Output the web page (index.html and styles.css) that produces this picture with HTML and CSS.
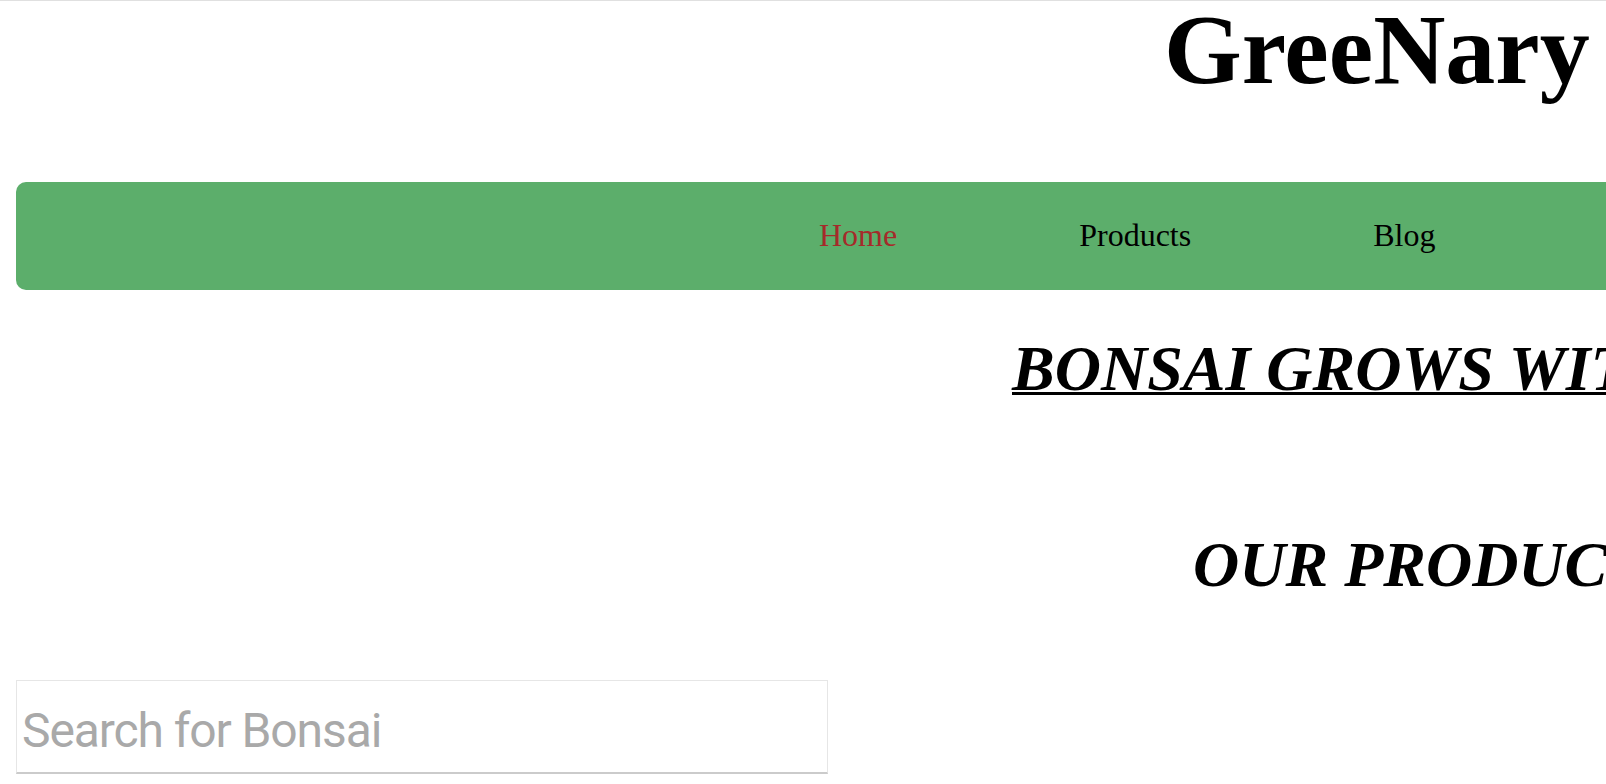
FILE: index.html
```html
<!DOCTYPE html>
<html lang="en">
<head>
<meta charset="utf-8">
<title>GreeNary</title>
<link rel="stylesheet" href="styles.css">
</head>
<body>
<div class="page">
  <header class="masthead">
    <h1 class="brand">GreeNary</h1>
  </header>
  <nav class="menu">
    <ul class="menu-list">
      <li class="menu-item"><a class="menu-link is-active" href="#">Home</a></li>
      <li class="menu-item"><a class="menu-link" href="#">Products</a></li>
      <li class="menu-item"><a class="menu-link" href="#">Blog</a></li>
    </ul>
  </nav>
  <main class="content">
    <h2 class="tagline">BONSAI GROWS WITH LOVE</h2>
    <h2 class="section-title">OUR PRODUCTS</h2>
    <input class="search" type="text" placeholder="Search for Bonsai">
  </main>
</div>
</body>
</html>
```
FILE: styles.css
```css
html {
  overflow: hidden;
}

body {
  margin: 0;
  border-top: 1px solid #e0e0e0;
  background: #fff;
  color: #000;
  font-family: "Liberation Serif", "Times New Roman", serif;
}

.page {
  width: 2600px;
}

.brand {
  margin: 0;
  padding-left: 1164px;
  font-size: 100px;
  font-weight: 700;
  line-height: 98px;
  white-space: nowrap;
}

.menu {
  margin: 83px 0 0 16px;
  height: 108px;
  box-sizing: border-box;
  padding: 35px 0 0 803px;
  background: #5cae6b;
  border-radius: 10px;
}

.menu-list {
  display: flex;
  gap: 182px;
  margin: 0;
  padding: 0;
  list-style: none;
  font-size: 32px;
}

.menu-link {
  color: #000;
  text-decoration: none;
}

.menu-link.is-active {
  color: #a52a2a;
}

.content {
  display: block;
}

.tagline,
.section-title {
  font-size: 64px;
  font-weight: 700;
  font-style: italic;
  line-height: 74px;
  white-space: nowrap;
}

.tagline {
  margin: 42px 0 0;
  padding-left: 1012px;
  text-decoration: underline;
  text-decoration-thickness: 3px;
  text-underline-offset: 2px;
}

.section-title {
  margin: 122px 0 0;
  padding-left: 1193px;
}

.search {
  display: block;
  margin: 78px 0 0 16px;
  width: 812px;
  height: 94px;
  box-sizing: border-box;
  padding: 8px 2px 0 5px;
  border: 1px solid #e6e6e6;
  border-bottom: 2px solid #cbcbcb;
  border-radius: 0;
  font-family: Roboto, "Liberation Sans", sans-serif;
  font-size: 48px;
  letter-spacing: -1.1px;
  color: #333;
  background: #fff;
  outline: none;
}

.search::placeholder {
  color: #a9a9a9;
}
```
